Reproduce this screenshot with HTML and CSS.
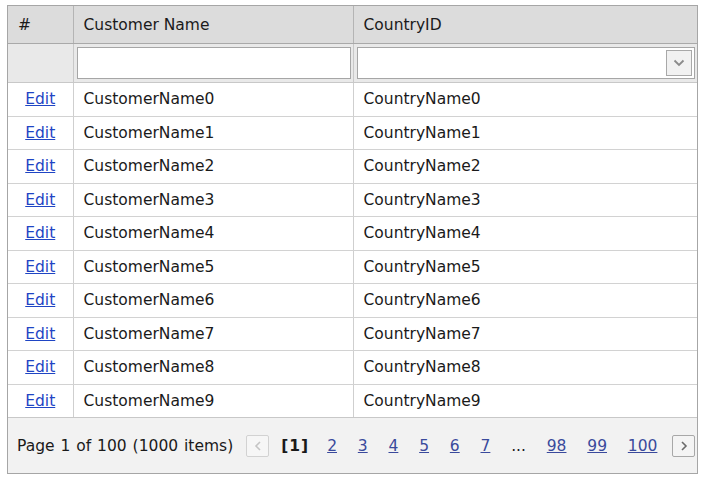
FILE: index.html
```html
<!DOCTYPE html>
<html>
<head>
<meta charset="utf-8">
<link rel="stylesheet" href="styles.css">
</head>
<body>
<div class="grid">
  <table class="gv">
    <colgroup><col class="c0"><col class="c1"><col class="c2"></colgroup>
    <tr class="hdr"><th>#</th><th>Customer Name</th><th>CountryID</th></tr>
    <tr class="flt">
      <td></td>
      <td><div class="tb"></div></td>
      <td><div class="cb"><span class="btn"><svg width="12" height="8" viewBox="0 0 12 8"><path d="M1.5 1.5 L6 6 L10.5 1.5" fill="none" stroke="#8a8a8a" stroke-width="1.8"/></svg></span></div></td>
    </tr>
    <tr class="row"><td class="cmd"><a href="#">Edit</a></td><td>CustomerName0</td><td>CountryName0</td></tr>
    <tr class="row"><td class="cmd"><a href="#">Edit</a></td><td>CustomerName1</td><td>CountryName1</td></tr>
    <tr class="row"><td class="cmd"><a href="#">Edit</a></td><td>CustomerName2</td><td>CountryName2</td></tr>
    <tr class="row"><td class="cmd"><a href="#">Edit</a></td><td>CustomerName3</td><td>CountryName3</td></tr>
    <tr class="row"><td class="cmd"><a href="#">Edit</a></td><td>CustomerName4</td><td>CountryName4</td></tr>
    <tr class="row"><td class="cmd"><a href="#">Edit</a></td><td>CustomerName5</td><td>CountryName5</td></tr>
    <tr class="row"><td class="cmd"><a href="#">Edit</a></td><td>CustomerName6</td><td>CountryName6</td></tr>
    <tr class="row"><td class="cmd"><a href="#">Edit</a></td><td>CustomerName7</td><td>CountryName7</td></tr>
    <tr class="row"><td class="cmd"><a href="#">Edit</a></td><td>CustomerName8</td><td>CountryName8</td></tr>
    <tr class="row"><td class="cmd"><a href="#">Edit</a></td><td>CustomerName9</td><td>CountryName9</td></tr>
  </table>
  <div class="pager">
    <span class="summary">Page 1 of 100 (1000 items)</span>
    <span class="pbtn dis"><svg width="8" height="10" viewBox="0 0 8 10"><path d="M6 1 L2 5 L6 9" fill="none" stroke="#c4c4c4" stroke-width="1.6"/></svg></span>
    <b class="cur">[1]</b>
    <a href="#" class="pn first">2</a>
    <a href="#" class="pn">3</a>
    <a href="#" class="pn">4</a>
    <a href="#" class="pn">5</a>
    <a href="#" class="pn">6</a>
    <a href="#" class="pn">7</a>
    <span class="ell">...</span>
    <a href="#" class="pn">98</a>
    <a href="#" class="pn">99</a>
    <a href="#" class="pn">100</a>
    <span class="pbtn next"><svg width="8" height="10" viewBox="0 0 8 10"><path d="M2 1 L6 5 L2 9" fill="none" stroke="#6a6a6a" stroke-width="1.6"/></svg></span>
  </div>
</div>
</body>
</html>
```
FILE: styles.css
```css
html, body { margin: 0; padding: 0; background: #fff; }
body { padding: 5px 0 0 7px; font-family: "DejaVu Sans", Verdana, sans-serif; font-size: 15.5px; color: #1a1a1a; }
.grid { width: 689px; border: 1px solid #a6a6a6; }
.gv { width: 689px; border-collapse: collapse; table-layout: fixed; }
.c0 { width: 65px; }
.c1 { width: 280px; }
.c2 { width: 344px; }
.gv th, .gv td { padding: 0 0 0 10px; text-align: left; font-weight: normal; white-space: nowrap; }
.gv td + td, .gv th + th { border-left: 1px solid #cfcfcf; }
.hdr th { background: #dcdcdc; height: 37px; border-bottom: 1px solid #a9a9a9; padding-top: 0; }
.hdr th + th { border-left-color: #b4b4b4; }
.flt td { background: #e9e9e9; height: 38px; border-bottom: 1px solid #c8c8c8; padding: 0; }
.flt td + td { border-left-color: #c8c8c8; }
.tb { margin: 0 2px 0 3px; height: 30px; border: 1px solid #a6a6a6; background: #fff; }
.cb { margin: 0 2px 0 3px; height: 30px; border: 1px solid #a6a6a6; background: #fff; display: flex; justify-content: flex-end; align-items: center; padding-right: 2px; }
.btn { width: 24px; height: 24px; border: 1px solid #a8a8a8; background: #f1f1f1; display: flex; align-items: center; justify-content: center; }
.row td { height: 32.5px; border-bottom: 1px solid #d2d2d2; }
.row:last-child td { border-bottom: 1px solid #c8c8c8; }
td.cmd { text-align: center; padding: 0; }
.cmd a { color: #1f45c4; text-decoration: underline; }
.pager { background: #f2f2f2; height: 55px; display: flex; align-items: center; padding-left: 9px; }
.summary { margin-right: 13px; word-spacing: 1px; }
.pbtn { width: 21px; height: 20px; border: 1px solid #a8a8a8; border-radius: 2px; background: #f4f4f4; display: flex; align-items: center; justify-content: center; margin-top: 1px; }
.pbtn.dis { border-color: #d2d2d2; background: #f6f6f6; }
.pbtn.next { margin-left: 15px; }
.cur { font-weight: bold; margin-left: 12px; letter-spacing: 1px; }
.pn { color: #3a4a9c; text-decoration: underline; margin-left: 20.8px; }
.pn.first { margin-left: 18px; }
.ell { margin-left: 20.8px; }
```
